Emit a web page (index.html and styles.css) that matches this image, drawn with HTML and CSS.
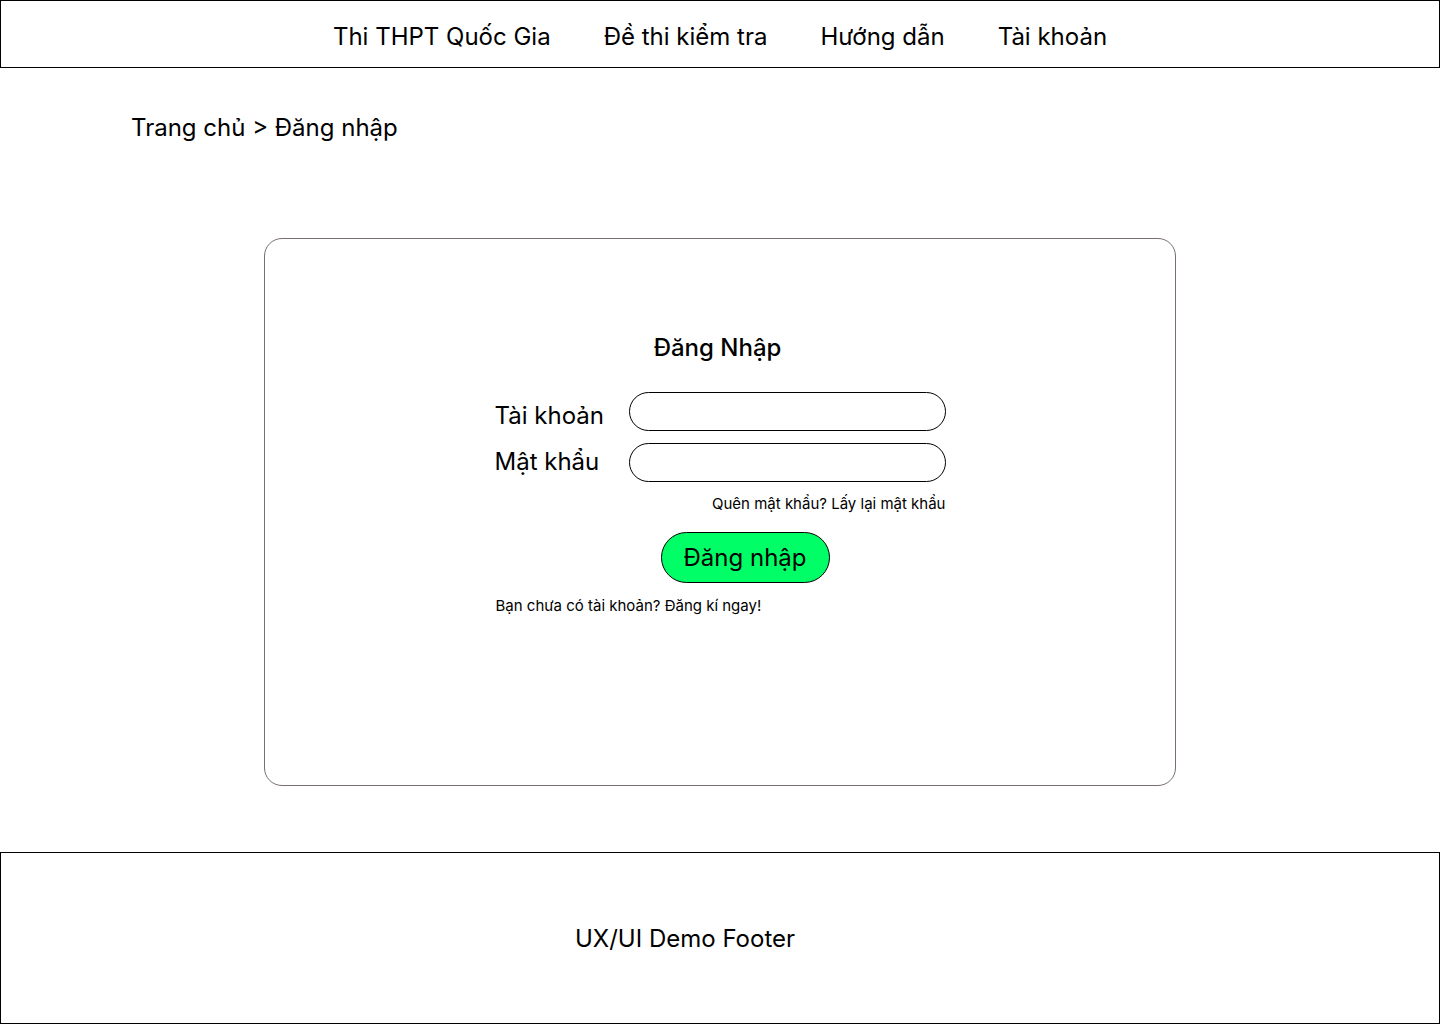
FILE: index.html
```html
<!DOCTYPE html>
<html lang="vi">
<head>
<meta charset="utf-8">
<title>Đăng nhập</title>
<link rel="stylesheet" href="styles.css">
</head>
<body>
<header class="topbar">
  <nav class="nav">
    <a class="nav-item">Thi THPT Quốc Gia</a>
    <a class="nav-item">Đề thi kiểm tra</a>
    <a class="nav-item">Hướng dẫn</a>
    <a class="nav-item">Tài khoản</a>
  </nav>
</header>
<div class="breadcrumb">Trang chủ &gt; Đăng nhập</div>
<main class="card">
  <h1 class="title">Đăng Nhập</h1>
  <form class="form">
    <div class="row">
      <label class="label label-1">Tài khoản</label>
      <input class="input" type="text">
    </div>
    <div class="row row-2">
      <label class="label label-2">Mật khẩu</label>
      <input class="input" type="password">
    </div>
    <div class="forgot">Quên mật khẩu? Lấy lại mật khẩu</div>
    <div class="btn-wrap"><button type="button" class="btn">Đăng nhập</button></div>
    <div class="signup">Bạn chưa có tài khoản? Đăng kí ngay!</div>
  </form>
</main>
<footer class="footer">
  <span class="footer-text">UX/UI Demo Footer</span>
</footer>
</body>
</html>
```
FILE: styles.css
```css
* { box-sizing: border-box; }
html, body { margin: 0; padding: 0; }
body {
  font-family: Inter, "Noto Sans", sans-serif;
  color: #000;
  background: #fff;
  width: 1440px;
}
.topbar {
  height: 68px;
  border: 1px solid #000;
  display: flex;
  align-items: center;
  justify-content: center;
}
.nav {
  display: flex;
  gap: 53px;
  padding-top: 4px;
}
.nav-item {
  font-size: 24px;
  line-height: 29px;
  color: #000;
  text-decoration: none;
}
.breadcrumb {
  margin-top: 45px;
  padding-left: 131px;
  font-size: 24px;
  line-height: 29px;
}
.card {
  margin: 96px 0 0 264px;
  width: 912px;
  height: 548px;
  border: 1px solid #786d70;
  border-radius: 18px;
  padding-top: 94px;
  display: flex;
  flex-direction: column;
  align-items: center;
}
.title {
  margin: 0;
  font-size: 24px;
  font-weight: 500;
  line-height: 29px;
  padding-right: 5px;
}
.form {
  width: 451px;
  margin-top: 30px;
  margin-left: 0;
  display: flex;
  flex-direction: column;
}
.row {
  display: flex;
  align-items: center;
}
.row-2 { margin-top: 12px; }
.label {
  width: 134px;
  font-size: 24px;
  line-height: 29px;
}
.label-1 { padding-top: 8px; }
.label-2 { padding-bottom: 2px; }
.input {
  width: 317px;
  height: 39px;
  border: 1px solid #000;
  border-radius: 20px;
  background: #fff;
  outline: none;
  margin: 0;
  padding: 0 16px;
}
.forgot {
  margin-top: 13px;
  text-align: right;
  font-size: 15px;
  line-height: 18px;
}
.btn-wrap {
  margin-top: 19px;
  padding-left: 166px;
}
.btn {
  width: 169px;
  height: 51px;
  border: 1px solid #000;
  border-radius: 26px;
  background: #00ff66;
  font-family: Inter, "Noto Sans", sans-serif;
  font-size: 24px;
  line-height: 29px;
  color: #000;
  padding: 0;
}
.signup {
  margin-top: 14px;
  padding-left: 1px;
  font-size: 15px;
  line-height: 18px;
}
.footer {
  margin-top: 66px;
  height: 172px;
  border: 1px solid #000;
  display: flex;
  align-items: center;
  justify-content: center;
  padding-right: 70px;
}
.footer-text {
  font-size: 24px;
  line-height: 29px;
}
```
